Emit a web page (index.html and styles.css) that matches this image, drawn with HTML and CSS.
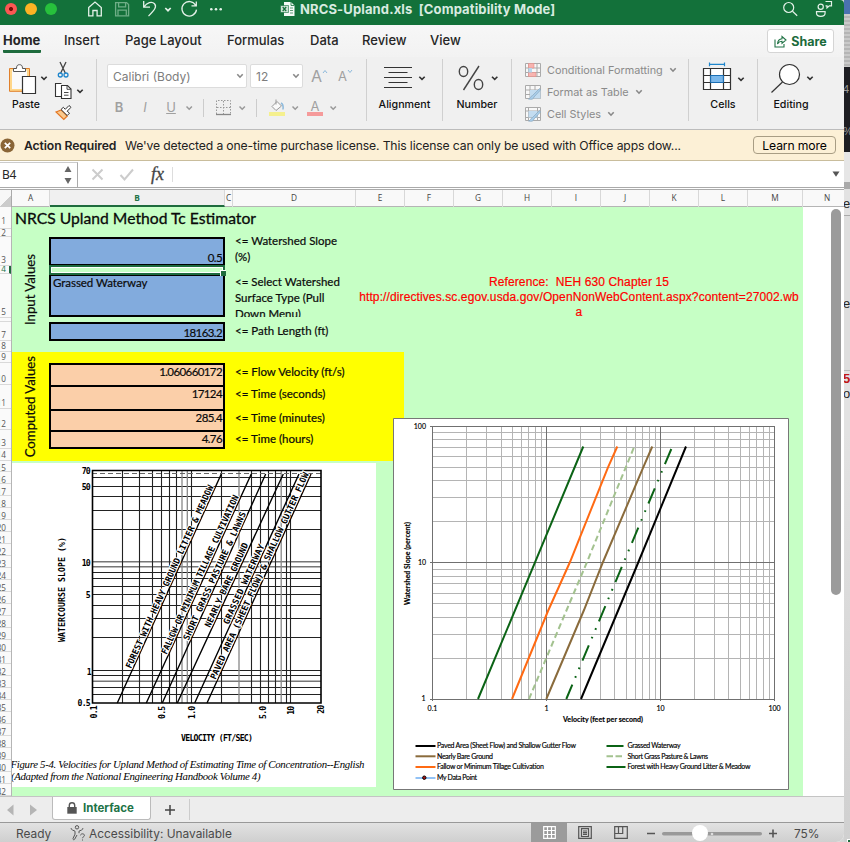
FILE: index.html
```html
<!DOCTYPE html>
<html lang="en">
<head>
<meta charset="utf-8">
<title>NRCS-Upland.xls</title>
<link rel="stylesheet" href="styles.css">
</head>
<body>
<svg class="defs" width="0" height="0">
  <symbol id="chev" viewBox="0 0 8 6"><path d="M1.3 1.3 4 4.2 6.7 1.3" fill="none" stroke="currentColor" stroke-width="1.6"/></symbol>
</svg>
<div class="desktop">
<div class="window">
  <header class="titlebar">
    <span class="light red"></span><span class="light amber"></span><span class="light green"></span>
    <svg class="quick" width="150" height="25" viewBox="80 0 150 25" fill="none" stroke="#e4f1e8" stroke-width="1.3">
      <path d="M88.700 7.500 95 2l6.300 5.500v8.300h-4.200v-5.300h-4.200v5.300h-4.200z"/>
      <g stroke="#6fae87"><path d="M115.600 2.600h11l2 2v11.200h-13z"/><path d="M118.600 2.800v4h7v-4M118 15.600v-5.500h8.300v5.500"/></g>
      <path d="M143.700 1v6.200h6.300M143.900 7c3-4.500 8-6 10.600-3.300 2.500 2.800.5 6-6 12.400"/>
      <path d="m165.300 8 2.700 2.700 2.700-2.700" stroke-width="1.700"/>
      <path d="M195.600 5.200a7.300 7.300 0 1 0 .9 4.500M196.300 1.400v4.500h-4.800"/>
      <g fill="#e4f1e8" stroke="none"><circle cx="211.300" cy="9.300" r="1.300"/><circle cx="216" cy="9.300" r="1.300"/><circle cx="220.700" cy="9.300" r="1.300"/></g>
    </svg>
    <svg class="docicon" width="16" height="16" viewBox="0 0 16 16"><path d="M4 1h7l3.500 3.500V15H4z" fill="#f4faf6"/><path d="M11 1v3.500h3.500" fill="none" stroke="#13713a" stroke-width=".8"/><path d="M10 7h3M10 9.500h3M10 12h3" stroke="#5f9c78"/><path d="M.5 4.500h8v7h-8z" fill="#cfe3d6" stroke="#13713a" stroke-width=".6"/><path d="m2.700 6 3.500 4M6.200 6l-3.500 4" stroke="#13713a" stroke-width="1.200"/></svg>
    <span class="doctitle">NRCS-Upland.xls&nbsp; [Compatibility Mode]</span>
    <svg class="tools" width="54" height="25" viewBox="780 0 54 25" fill="none" stroke="#e4f1e8" stroke-width="1.200"><circle cx="788.700" cy="7.500" r="5"/><path d="m792.500 11.200 4.700 4.500"/><circle cx="820.700" cy="6.700" r="2.600"/><path d="M816.500 11.700h8.600v1.300c0 2-1.700 3.400-4.300 3.400s-4.300-1.400-4.300-3.400zM825.500 1.500h6v4.300h-2.200l-2.300 2.100v-2.100h-1.500"/></svg>
  </header>

  <nav class="tabs">
    <span class="tab active">Home</span><span class="tab">Insert</span><span class="tab">Page Layout</span><span class="tab">Formulas</span><span class="tab">Data</span><span class="tab">Review</span><span class="tab">View</span>
    <button class="share"><svg width="13" height="13" viewBox="0 0 13 13" fill="none" stroke="#217346" stroke-width="1.100"><path d="M1 4.500v7.500h9V9"/><path d="M3.500 9c.3-3.500 2-5 4.500-5.200V1.500L12 5 8 8.400V6.300C6 6.300 4.700 7 3.500 9z"/></svg><span>Share</span></button>
  </nav>

  <section class="ribbon">
    <div class="group clipboard">
      <div class="paste"><svg width="40" height="34" viewBox="8 62 40 34"><path d="M9.500 68.500h20v22.800h-20z" fill="#ffd78a" stroke="#e0802b"/><path d="M12 70.500h15v18.500H12z" fill="#fafafa"/><path d="M13.500 71.500v-3h3c0-2.800 1-3.800 3-3.800s3 1 3 3.800h3v3z" fill="#fff" stroke="#555"/><path d="M22.500 76.500h13v17h-13z" fill="#fff" stroke="#333" stroke-width="1.200"/><path d="m41.300 76.700 2.700 2.700 2.700-2.700" fill="none" stroke="#333" stroke-width="1.600"/></svg><span>Paste</span></div>
      <svg class="clips" width="34" height="64" viewBox="52 60 34 64"><path d="m60 63 5.500 11.500M66 63l-5.500 11.500" stroke="#444" stroke-width="1.300" fill="none"/><circle cx="60.300" cy="76" r="2" fill="none" stroke="#1f86cc" stroke-width="1.300"/><circle cx="66" cy="76" r="2" fill="none" stroke="#1f86cc" stroke-width="1.300"/><path d="M61.500 97.500h-6V84.500h6M61.500 86.500h6l3.500 3.500v9.500h-9.500z" fill="#fff" stroke="#333" stroke-width="1.100"/><path d="M67 86.700v3.600h3.800M64 93.500h4.500M64 96.200h4.500" fill="none" stroke="#333" stroke-width=".9"/><path d="m77.300 90.700 2.700 2.700 2.700-2.700" fill="none" stroke="#333" stroke-width="1.600"/><path d="m56 113 5.300-2 6 6-3.500 3.500z" fill="#f9c98e" stroke="#e57622" stroke-width="1.200"/><path d="m61 110.500 2.300-2.200 2 2 3.700-3.800 2 1.800-3.800 3.900 2.300 2-2.300 2.300z" fill="#fff" stroke="#333"/></svg>
    </div>
    <div class="group font">
      <div class="fontrow">
        <span class="select face">Calibri (Body)<svg class="chev"><use href="#chev"/></svg></span>
        <span class="select size">12<svg class="chev"><use href="#chev"/></svg></span>
        <span class="grow">A<svg width="6" height="5" viewBox="0 0 6 5"><path d="m1 4 2-2.500L5 4" fill="none" stroke="#8cb9dc"/></svg></span>
        <span class="grow small">A<svg width="6" height="5" viewBox="0 0 6 5"><path d="m1 1 2 2.500L5 1" fill="none" stroke="#8cb9dc"/></svg></span>
      </div>
      <div class="fontrow formats">
        <b>B</b><i>I</i><u>U</u>
        <svg width="154" height="20" viewBox="184 97 154 20"><g fill="none" stroke="#999" stroke-width="1.500"><path d="m186.500 106.500 2.700 2.700 2.700-2.700M239.500 106.500l2.700 2.700 2.700-2.700M292.500 106.500l2.700 2.700 2.700-2.700M330.500 106.500l2.700 2.700 2.700-2.700"/></g><path d="M203.500 99v18M256.500 99v18" stroke="#ccc"/><path d="M216.500 114v-13.500h14V114M223.500 101v13M217 107.500h14" fill="none" stroke="#999" stroke-dasharray="1.500 1.500"/><path d="M216 114.500h15" stroke="#888" stroke-width="1.300"/><path d="m272 106.500 5-5 4.500 4.500-5.500 4.500zM276 99.500v5" fill="#fafafa" stroke="#999"/><path d="M281 103c2 1 2.500 3 2 6.500" stroke="#8cb9dc" stroke-width="1.500" fill="none"/><path d="M269 112h16v4h-16z" fill="#f5f08e"/><path d="M307 112h16v4h-16z" fill="#f59a9a"/><text x="315" y="110.500" text-anchor="middle" class="svgui" font-size="13">A</text></svg>
      </div>
    </div>
    <div class="group big"><svg width="50" height="34" viewBox="380 62 50 34" fill="none" stroke="#333"><path d="M384 67.500h28M388.500 72.500h19M384 77.500h28M388.500 82.500h19M384 87.500h28" stroke-width="1.200"/><path d="m419.300 76.700 2.700 2.700 2.700-2.700" stroke-width="1.600"/></svg><span>Alignment</span></div>
    <div class="group big"><svg width="50" height="34" viewBox="452 62 50 34" fill="none" stroke="#444" stroke-width="1.400"><ellipse cx="463.500" cy="71.500" rx="4.200" ry="5"/><ellipse cx="478.500" cy="84.500" rx="4.200" ry="5"/><path d="m479 66-15.500 24"/><path d="m492 76.700 2.700 2.700 2.700-2.700" stroke="#333" stroke-width="1.600"/></svg><span>Number</span></div>
    <div class="group styles">
      <div><svg width="16" height="15" viewBox="0 0 16 15"><path d="M.5.500h15v13H.5zM3.500.500v13M12 .5v13M.5 5h15M.5 9.500h15" fill="#f8f8f8" stroke="#aaa"/><path d="M3.500.500H9V5H3.500zM3.500 9.500H11v4H3.500z" fill="#f8b4b0" stroke="#e58f8a" stroke-width=".6"/><path d="M3.500 5H7v4.500H3.500z" fill="#b9d8ef"/></svg><span>Conditional Formatting</span><svg class="chev"><use href="#chev"/></svg></div>
      <div><svg width="16" height="15" viewBox="0 0 16 15"><path d="M.5.500h15v13H.5zM5 .5v13M10 .5v13M.5 5h15M.5 9.500h15" fill="#f8f8f8" stroke="#aaa"/><path d="M5 5h10.500v8.500H5z" fill="#c3dcf0"/><path d="m14.500 3.500-7 7c-2 .5-1.500 3-4 3.500 3 .8 5 .3 5.500-2l6.500-7z" fill="#a9cdea" stroke="#8aa9c0" stroke-width=".7"/></svg><span>Format as Table</span><svg class="chev"><use href="#chev"/></svg></div>
      <div><svg width="16" height="15" viewBox="0 0 16 15"><path d="M.5.500h15v13H.5zM3.500.500v13M.5 4h15M12.500.500v13M.5 10.500h15" fill="#f8f8f8" stroke="#aaa"/><path d="M3.500 4h9v6.500h-9z" fill="#c3dcf0"/><path d="m14.500 3.500-7 7c-2 .5-1.500 3-4 3.500 3 .8 5 .3 5.500-2l6.500-7z" fill="#a9cdea" stroke="#8aa9c0" stroke-width=".7"/></svg><span>Cell Styles</span><svg class="chev"><use href="#chev"/></svg></div>
    </div>
    <div class="group big"><svg width="50" height="34" viewBox="698 61 50 34" fill="none"><path d="M709.500 63.300h15M709.500 61.500v3.700M724.500 61.500v3.700" stroke="#1f86cc" stroke-width="1.200"/><path d="M703.500 67.500h27v21h-27z" fill="#fff"/><path d="M710.500 74.500h13v7h-13z" fill="#7ab8ec"/><path d="M703.500 67.500h27v21h-27zM703.500 74.500h27M703.500 81.500h27M710.500 67.500v21M723.500 67.500v21" stroke="#333" stroke-width="1.200"/><path d="M710.500 74.500h13v7h-13z" stroke="#1b6fb5"/><path d="m738.300 76.700 2.700 2.700 2.700-2.700" stroke="#333" stroke-width="1.600"/></svg><span>Cells</span></div>
    <div class="group big"><svg width="50" height="34" viewBox="766 62 50 34" fill="none" stroke="#333" stroke-width="1.200"><circle cx="789.500" cy="74.500" r="10" fill="#fff"/><path d="m782.500 82-11 10.500"/><path d="m807.300 76.700 2.700 2.700 2.700-2.700" stroke-width="1.600"/></svg><span>Editing</span></div>
  </section>

  <section class="notice">
    <svg width="15" height="15" viewBox="0 0 15 15"><circle cx="7.500" cy="7.500" r="7" fill="#8a6536"/><path d="m4.800 4.800 5.400 5.400M10.200 4.800l-5.400 5.400" stroke="#fff" stroke-width="1.700"/></svg>
    <strong>Action Required</strong><span class="msg">We've detected a one-time purchase license. This license can only be used with Office apps dow...</span>
    <button>Learn more</button>
  </section>

  <section class="formulabar">
    <div class="namebox"><span>B4</span><svg width="8" height="20" viewBox="0 0 8 20" fill="#666"><path d="M4 1 7.500 7h-7zM4 19l3.500-6h-7z"/></svg></div>
    <svg class="fxbtns" width="50" height="16" viewBox="90 166 50 16" fill="none" stroke="#ccc" stroke-width="2"><path d="m92.500 169.500 10 10M102.500 169.500l-10 10M120.500 175l4 4.500 8.500-10"/></svg>
    <em>fx</em><span class="formula"></span>
    <svg width="8" height="6" viewBox="0 0 8 6"><path d="M.5.500h7L4 5.700z" fill="#555"/></svg>
  </section>

  <div class="colheads"><span class="corner"></span><span>A</span><span class="sel">B</span><span>C</span><span>D</span><span>E</span><span>F</span><span>G</span><span>H</span><span>I</span><span>J</span><span>K</span><span>L</span><span>M</span><span>N</span></div>

  <main class="sheet">
    <div class="rowheads">
      <span>1</span><span>2</span><span>3</span><span class="sel">4</span><span>5</span><span></span><span>7</span><span>8</span><span>9</span><span>10</span><span>11</span><span>12</span><span>13</span><span>14</span><span>15</span><span>16</span><span>17</span><span>18</span><span>19</span><span>20</span><span>21</span><span>22</span><span>23</span><span>24</span><span>25</span><span>26</span><span>27</span><span>28</span><span>29</span><span>30</span><span>31</span><span>32</span><span>33</span><span>34</span><span>35</span><span>36</span><span>37</span><span>38</span><span>39</span><span>40</span><span>41</span><span>42</span>
    </div>
    <div class="cells">
      <div class="yellow"></div>
      <h1>NRCS Upland Method Tc Estimator</h1>
      <div class="side inputs"><span>Input Values</span></div>
      <div class="side computed"><span>Computed Values</span></div>
      <div class="cell blue r3">0.5</div><div class="cell active r4"></div><div class="cell blue r5 text">Grassed Waterway</div><div class="cell blue r7">18163.2</div>
      <div class="cell peach r10">1.060660172</div><div class="cell peach r11">17124</div><div class="cell peach r12">285.4</div><div class="cell peach r13">4.76</div>
      <div class="note n3"><span>&lt;= Watershed Slope<br>(%)</span></div>
      <div class="note n5"><span>&lt;= Select Watershed<br>Surface Type (Pull<br>Down Menu)</span></div>
      <div class="note n7"><span>&lt;= Path Length (ft)</span></div>
      <div class="note n10"><span>&lt;= Flow Velocity (ft/s)</span></div>
      <div class="note n11"><span>&lt;= Time (seconds)</span></div>
      <div class="note n12"><span>&lt;= Time (minutes)</span></div>
      <div class="note n13"><span>&lt;= Time (hours)</span></div>
      <div class="reference">Reference:&nbsp; NEH 630 Chapter 15<br>http://directives.sc.egov.usda.gov/OpenNonWebContent.aspx?content=27002.wb<br>a</div>

      <svg class="figure" width="364" height="324" viewBox="12 463 364 324">
        <path d="M12 463h364v324H12z" fill="#fff"/>
        <g fill="none" stroke="#222" stroke-width="1.100">
          <path d="M92 477.500h229M92 486.500h229M92 496.500h229M92 510.500h229M92 529.500h229M92 572.500h229M92 578.500h229M92 586.500h229M92 594.500h229M92 605.500h229M92 618.500h229M92 637.500h229M92 670.500h229M92 675.500h229M92 687.500h229M92 694.500h229"/>
          <path d="M92 561.700h229M92 566.700h229M92 681.200h229" stroke="#777" stroke-width="1.600"/>
          <path d="M122.500 470v233M139.500 470v233M152.500 470v233M161.500 470v233M169.500 470v233M176.500 470v233M191.500 470v233M221.500 470v233M251.500 470v233M260.500 470v233M268.500 470v233M275.500 470v233M286.500 470v233M290.500 470v233"/>
          <path d="M182 470v233M187.300 470v233M239 470v233M281.200 470v233" stroke="#888" stroke-width="1.300"/>
          <path d="M92 473.500h229" stroke="#666" stroke-dasharray="5 3"/>
          <path d="M92.500 470.500h228.500V703H92.500z" stroke="#000" stroke-width="1.600"/>
        </g>
        <path d="m117.300 703 104-229M146.300 703l105-229M162.300 703l103.400-229M177.300 703l106-229M194.700 703 299 474M207 703l104-229" stroke="#000" stroke-width="1.400" fill="none"/>
        <g class="plot-label">
          <text transform="translate(131 669) rotate(-65.600)" textLength="200">FOREST WITH HEAVY GROUND LITTER &amp; MEADOW</text>
          <text transform="translate(166.500 655) rotate(-65.400)" textLength="174">FALLOW OR MINIMUM TILLAGE CULTIVATION</text>
          <text transform="translate(188.500 641) rotate(-65.700)" textLength="140">SHORT GRASS PASTURE &amp; LAWNS</text>
          <text transform="translate(210 628) rotate(-65.200)" textLength="92">NEARLY BARE GROUND</text>
          <text transform="translate(228.500 625) rotate(-65.500)" textLength="87">GRASSED WATERWAY</text>
          <text transform="translate(215.500 680) rotate(-65.600)" textLength="226">PAVED AREA (SHEET FLOW) &amp; SHALLOW GUTTER FLOW</text>
        </g>
        <g class="axis-label">
          <text transform="translate(65.300 642) rotate(-90)" textLength="105">WATERCOURSE SLOPE (%)</text>
          <text x="181" y="741" textLength="72">VELOCITY (FT/SEC)</text>
          <g class="ticks" text-anchor="end"><text x="90" y="474">70</text><text x="90" y="490">50</text><text x="90" y="566">10</text><text x="90" y="598">5</text><text x="91" y="674.500">1</text><text x="90" y="706">0.5</text>
          <text transform="translate(96.500 706) rotate(-90)">0.1</text><text transform="translate(164.500 706.500) rotate(-90)">0.5</text><text transform="translate(194.500 706.500) rotate(-90)">1.0</text><text transform="translate(265.500 706.500) rotate(-90)">5.0</text><text transform="translate(293.500 706.500) rotate(-90)">10</text><text transform="translate(323.500 705.500) rotate(-90)">20</text></g>
        </g>
        <g class="caption"><text x="10.500" y="767.500" textLength="354">Figure 5-4. Velocities for Upland Method of Estimating Time of Concentration--English</text><text x="11" y="780" textLength="249.500">(Adapted from the National Engineering Handbook Volume 4)</text></g>
      </svg>

      <svg class="chart" width="396" height="372" viewBox="393 418 396 372">
        <path d="M393.500 418.500h395v371h-395z" fill="#fff" stroke="#777"/>
        <g fill="none" stroke="#b4b4b4">
          <path d="M466.500 426v273M486.500 426v273M501.500 426v273M512.500 426v273M521.500 426v273M528.500 426v273M535.500 426v273M541.500 426v273M580.500 426v273M600.500 426v273M614.500 426v273M626.500 426v273M635.500 426v273M642.500 426v273M649.500 426v273M655.500 426v273M694.500 426v273M714.500 426v273M728.500 426v273M740.500 426v273M749.500 426v273M756.500 426v273M763.500 426v273M769.500 426v273"/>
          <path d="M432 658.500h342M432 634.500h342M432 617.500h342M432 603.500h342M432 593.500h342M432 583.500h342M432 576.500h342M432 569.500h342M432 521.500h342M432 497.500h342M432 480.500h342M432 467.500h342M432 456.500h342M432 447.500h342M432 439.500h342M432 432.500h342"/>
          <path d="M432.500 426v275M546.500 426v275M660.500 426v275M774.500 426v275M430 426.500h345M430 562.500h345M430 699.500h345" stroke="#707070"/>
        </g>
        <g fill="none" stroke-width="2">
          <path d="m478 699 57-136.700L583.300 446.500" stroke="#0b6315"/>
          <path d="m512 699 36-88 11.700-26L570 562l38-94.700 9.300-20.800" stroke="#ff6a13"/>
          <path d="m529 699 38.500-91L587 562l47.300-115.500" stroke="#a3c28f" stroke-dasharray="6 3.500"/>
          <path d="m546.300 699 37.700-89 19-48 39.700-93.300 9.600-22.200" stroke="#8a6b3c"/>
          <path d="M671.300 449 566.300 699" stroke="#0b6315" stroke-dasharray="16.500 7.500 1.700 7.700 1.700 7.500"/>
          <path d="m581 699 56-133.500 49-119" stroke="#000"/>
        </g>
        <g class="charttext">
          <g text-anchor="end"><text x="426" y="428.500">100</text><text x="426" y="565">10</text><text x="425.500" y="701">1</text></g>
          <g text-anchor="middle"><text x="432.500" y="711">0.1</text><text x="546.500" y="711">1</text><text x="660.500" y="711">10</text><text x="774.500" y="711">100</text></g>
          <text class="strong" x="563" y="721.500" textLength="80">Velocity (feet per second)</text>
          <text class="strong" transform="translate(410 605) rotate(-90)" textLength="83">Watershed Slope (percent)</text>
          <text x="437" y="748" textLength="139">Paved Area (Sheet Flow) and Shallow Gutter Flow</text>
          <text x="437" y="759" textLength="56">Nearly Bare Ground</text>
          <text x="437" y="769" textLength="107">Fallow or Minimum Tillage Cultivation</text>
          <text x="437" y="780" textLength="40">My Data Point</text>
          <text x="627.500" y="748" textLength="53">Grassed Waterway</text>
          <text x="627.500" y="759" textLength="80.500">Short Grass Pasture &amp; Lawns</text>
          <text x="627.500" y="769" textLength="123">Forest with Heavy Ground Litter &amp; Meadow</text>
        </g>
        <g fill="none" stroke-width="2"><path d="M415.500 746h20" stroke="#000"/><path d="M415.500 756.300h20" stroke="#8a6b3c"/><path d="M415.500 767h20" stroke="#ff6a13"/><path d="M415.500 778h20" stroke="#92c2f5"/><path d="M606.500 746h17M606.500 767h19" stroke="#0b6315"/><path d="M606.500 756.300h17" stroke="#a3c28f" stroke-dasharray="6.500 2.500"/></g>
        <circle cx="424.300" cy="777.700" r="1.700" fill="#b01515" stroke="#000"/>
      </svg>
    </div>
    <div class="gutter"><span class="thumb"></span></div>
  </main>

  <footer class="sheettabs">
    <svg width="42" height="14" viewBox="0 0 42 14" fill="#b5b5b5"><path d="M13.500 1.500v11L7 7zM30 1.500v11L37 7z"/></svg>
    <div class="sheettab"><svg width="10" height="12" viewBox="0 0 10 12"><path d="M.3 5h9.400v6.700H.3z" fill="#555"/><path d="M2.300 5V3.500C2.300 1.800 3.300.8 5 .8s2.700 1 2.700 2.700V5" fill="none" stroke="#555" stroke-width="1.400"/></svg><span>Interface</span></div>
    <div class="add"><svg width="10" height="10" viewBox="0 0 10 10"><path d="M5 0v10M0 5h10" stroke="#444" stroke-width="1.500"/></svg></div>
  </footer>
  <footer class="status">
    <span class="ready">Ready</span>
    <svg width="16" height="16" viewBox="0 0 16 16" fill="none" stroke="#555"><circle cx="7" cy="2.300" r="1.700"/><path d="M1.500 3c-.8 1 0 1.500 1 2L5 6.200v3l-2 4.300c-.3 1.200 1 1.700 1.700.7L7 10M12.500 3c.8 1 0 1.500-1 2L9 6.200v2M10.500 10.300c.2-2 4-2 3.900.2 0 1.300-1.900 1.300-1.900 2.700M12.500 14.500v1"/></svg>
    <span class="acc">Accessibility: Unavailable</span>
    <span class="views">
      <span class="view on"><svg width="13" height="13" viewBox="0 0 13 13"><path d="M.7.700h11.600v11.600H.7zM4.500.500v12M8.500.500v12M.5 4.500h12M.5 8.500h12" fill="none" stroke="#fff" stroke-width="1.200"/></svg></span>
      <span class="view"><svg width="14" height="13" viewBox="0 0 14 13" fill="none" stroke="#555" stroke-width="1.200"><path d="M.7.700h12.600v11.600H.7zM3.500 2.700h7v7.800h-7zM5 5h4M5 6.700h4M5 8.400h4"/></svg></span>
      <span class="view"><svg width="14" height="13" viewBox="0 0 14 13" fill="none" stroke="#555" stroke-width="1.200"><path d="M.7.700h12.600v11.600H.7zM.7 7.500h8V.7M4.500.700v6.800"/></svg></span>
    </span>
    <svg class="slider" width="132" height="20" viewBox="645 823 132 20"><path d="M647 833.500h8M769 833.500h8M773 829.500v8" stroke="#555" stroke-width="1.600"/><rect x="662" y="832" width="100" height="3.600" rx="1.800" fill="#999"/><circle cx="712" cy="834" r="1.300" fill="#ddd"/><circle cx="700" cy="833" r="8" fill="#fff"/></svg>
    <span class="pct">75%</span>
  </footer>
</div>
<aside class="behind"><i class="b1"></i><i class="b2"></i><i class="b3"><span>4</span><span>%</span></i><i class="b4"><span>e</span></i><i class="b5"><span>e</span></i><i class="b6"><span class="redtext">5</span><span>o</span></i></aside>
</div>
</body>
</html>
```
FILE: styles.css
```css
* { box-sizing: border-box; }
body { margin: 0; width: 850px; height: 842px; overflow: hidden; font-family: Inter, "Liberation Sans", sans-serif; color: #262626; }
svg { display: block; flex: none; }
button { font: inherit; padding: 0; }
.defs { position: absolute; }
.desktop { display: flex; width: 850px; height: 842px; background: #d6d6d6; }
.window { width: 844px; height: 842px; display: flex; flex-direction: column; background: #fff; border-radius: 0 4px 8px 0; overflow: hidden; flex: none; }
.window > * { flex: none; }

.titlebar { height: 25px; background: #13713a; display: flex; align-items: flex-start; }
.light { width: 12px; height: 12px; border-radius: 50%; margin: 3px 4px 0; }
.light.red { margin-left: 5px; background: radial-gradient(circle, #7a0d08 0 1.6px, #fc5753 2.400px); }
.light.amber { background: #fdb324; }
.light.green { background: #27c13c; }
.quick { margin-left: 19px; }
.docicon { margin: 1px 0 0 50px; }
.doctitle { margin-left: 4px; line-height: 19px; font-size: 13px; font-weight: 700; letter-spacing: .13px; color: #d9ebe0; white-space: pre; width: 260px; }
.tools { margin-left: auto; margin-right: 10px; }

.tabs { height: 32px; background: linear-gradient(#f7f7f7, #f2f2f2); display: grid; grid-template-columns: 61px 61px 102px 83px 52px 68px 1fr auto; padding: 0 10px 0 3px; align-items: start; font-size: 13px; font-weight: 500; }
.tab { line-height: 30px; white-space: nowrap; }
.tab.active { font-weight: 700; width: 38px; height: 28px; border-bottom: 3px solid #1e6b3d; border-radius: 1px; }
.share { width: 67px; height: 24px; margin-top: 4px; border: 1px solid #d5d5d5; border-radius: 3px; background: #fff; color: #1b6b3b; font-weight: 700; font-size: 12.500px; display: flex; align-items: center; justify-content: center; gap: 4px; }

.ribbon { height: 73px; background: #f0f0f0; border-bottom: 1px solid #bcbcbc; display: grid; grid-template-columns: 97px 270px 76px 69px 177px 69px 1fr; align-items: start; font-size: 11px; }
.group { height: 62px; margin-top: 2px; border-right: 1px solid #d0d0d0; }
.group:last-child { border: 0; padding-right: 20px; }
.clipboard { display: flex; }
.paste { width: 52px; padding: 3px 0 0 8px; }
.paste span { display: block; margin-left: 4px; line-height: 14px; margin-top: 2px; color: #111; font-weight: 500; font-size: 10.500px; }
.big { display: flex; flex-direction: column; align-items: center; padding-top: 3px; }
.big span { line-height: 14px; margin-top: 2px; color: #111; font-weight: 500; font-size: 10.700px; }
.font { padding: 5px 0 0 10px; color: #a0a0a0; }
.fontrow { display: flex; height: 24px; align-items: center; }
.select { height: 24px; border: 1px solid #dcdcdc; border-radius: 2px; background: #fff; display: flex; align-items: center; justify-content: space-between; padding: 0 2px 0 5px; color: #7d7d7d; font-size: 12px; margin-right: 3px; }
.face { width: 140px; } .size { width: 53px; }
.chev { width: 8px; height: 6px; color: #888; }
.grow { display: flex; width: 27px; font-size: 16px; padding-left: 5px; line-height: 20px; }
.grow svg { margin-top: 3px; } .grow.small { font-size: 13px; }
.formats { margin-top: 7px; font-size: 13px; }
.formats b, .formats i, .formats u { width: 26px; text-align: center; }
.formats b { margin-left: -1px; font-weight: 600; }
.svgui { fill: #a0a0a0; font-family: Inter, sans-serif; }
.styles { display: grid; grid-template-rows: repeat(3, 22px); padding-left: 13px; color: #8a8a8a; }
.styles div { display: flex; align-items: center; gap: 6px; white-space: nowrap; font-size: 10.850px; }

.notice { height: 31px; background: #fcf0d6; border-bottom: 1px solid #c9bd9c; display: flex; align-items: center; font-size: 12.200px; color: #222; }
.notice strong { font-weight: 600; margin-left: 9px; width: 101px; white-space: nowrap; letter-spacing: -.1px; }
.msg { white-space: nowrap; letter-spacing: -.14px; }
.notice button { margin-left: auto; margin-right: 8px; width: 83px; height: 18px; border: 1px solid #a89d84; border-radius: 4px; background: transparent; white-space: nowrap; letter-spacing: -.15px; }

.formulabar { height: 29px; display: flex; align-items: center; border-bottom: 3px double #aaa; padding-right: 4px; }
.namebox { height: 25px; width: 78px; border-right: 1px solid #aaa; border-top: 1px solid #ccc; display: flex; align-items: center; justify-content: space-between; padding: 0 5px 0 2px; font: 12px "Noto Sans", sans-serif; letter-spacing: -.4px; }
.fxbtns { margin-left: 12px; }
.formulabar em { font: italic 18px "Liberation Serif", serif; margin-left: 11px; width: 21px; color: #444; -webkit-text-stroke: .3px; }
.formula { flex: 1; height: 15px; border-left: 1px solid #ddd; }

.colheads { height: 17px; display: grid; grid-template-columns: 12px 38px 175px 8px 123px repeat(8, 49px) 55px 49px; background: #f9f9f9; border-bottom: 1px solid #b5b5b5; font: 8.300px/15px "Open Sans", sans-serif; color: #444; text-align: center; }
.colheads span { border-right: 1px solid #d8d8d8; }
.colheads .corner { background: linear-gradient(135deg, #f7f7f7 58%, #ccc 58%); border-color: #aaa; }
.colheads .sel { background: #f0f0f0; color: #217346; border-bottom: 2px solid #1e6b3d; font-weight: 700; }

.sheet { height: 589px; display: grid; grid-template-columns: 12px 791px 1fr; overflow: hidden; }
.rowheads { display: grid; grid-template-rows: 22px 8px 29px 8px 44px 4px 19px 11px 11px 22px 24px 21px 19px 12px 10.500px repeat(26, 12px) 12.500px; background: #fafafa; border-right: 1px solid #b5b5b5; overflow: hidden; font: 8.200px/9px "Open Sans", sans-serif; color: #555; }
.rowheads span { border-bottom: 1px solid #d9d9d9; display: flex; justify-content: flex-end; align-items: flex-end; padding: 0 5px 1px 0; overflow: hidden; }
.rowheads span:first-child { padding-bottom: 3px; }
.rowheads span:nth-child(2) { padding-bottom: 0; line-height: 7px; }
.rowheads span:nth-child(n+15) { padding-bottom: 0; line-height: 6px; }
.rowheads .sel { border-right: 2px solid #1e6b3d; color: #217346; padding: 0 3px 0 0; }
.cells { position: relative; background: #c6ffc5; display: grid; grid-template-columns: 37px 176px 9px 124px 46px 399px; grid-template-rows: 22px 8px 29px 8px 43px 5px 19px 11px 11px 22px 24px 21px 19px 12px 1fr; color: #0a0a0a; font: 11.500px/16px Lato, sans-serif; -webkit-text-stroke: .2px; }
.cells svg { -webkit-text-stroke: 0; }
.yellow { grid-area: 9 / 1 / 15 / 6; background: #ff0; }
.cells h1 { grid-area: 1 / 1 / 2 / 6; margin: 0 0 0 3px; font: 15.700px/23px Lato, sans-serif; white-space: nowrap; -webkit-text-stroke: .3px; }
.side { display: flex; align-items: center; justify-content: center; font-size: 13.200px; padding-right: 2px; }
.side span { writing-mode: vertical-rl; transform: rotate(180deg); white-space: nowrap; line-height: 16px; }
.inputs { grid-area: 3 / 1 / 8 / 2; } .computed { grid-area: 9 / 1 / 15 / 2; }
.cell { grid-column: 2; border: 2px solid #000; display: flex; align-items: flex-end; justify-content: flex-end; padding-right: 1px; line-height: 13px; letter-spacing: -.6px; }
.blue { background: #82abdd; } .peach { background: #fbcfa9; align-items: flex-start; margin-bottom: -2px; line-height: 13px; }
.r3 { grid-row: 3; } .r4 { grid-row: 4; } .r5 { grid-row: 5; } .r7 { grid-row: 7; line-height: 12px; }
.r10 { grid-row: 10; } .r11 { grid-row: 11; } .r12 { grid-row: 12; } .r13 { grid-row: 13; margin-bottom: 0; }
.cell.active { border-color: #1e6b3d; box-shadow: inset 0 0 0 1px #fff; margin: -1px 0 -1px; z-index: 1; position: relative; }
.active::after { content: ""; position: absolute; right: -3px; bottom: -3px; width: 5px; height: 5px; background: #1e6b3d; border: solid #fff; border-width: 1px 0 0 1px; box-sizing: content-box; }
.text { align-items: flex-start; justify-content: flex-start; padding-left: 2px; letter-spacing: -.05px; }
.note { grid-column: 4; overflow: hidden; display: flex; align-items: flex-end; white-space: nowrap; padding-left: 1px; }
.n3 { grid-row: 3; padding-bottom: 1px; } .n5 { grid-row: 5; align-items: flex-start; } .n7 { grid-row: 7; padding-bottom: 2px; }
.n10 { grid-row: 10; align-items: flex-start; padding-top: 1px; } .n11 { grid-row: 11; align-items: flex-start; padding-top: 1px; } .n12 { grid-row: 12; align-items: flex-start; padding-top: 1px; } .n13 { grid-row: 13; align-items: flex-start; padding-top: 1px; }
.reference { grid-area: 5 / 6 / 8 / 7; margin-left: -48px; margin-top: 1px; width: 446px; text-align: center; color: #f00; font: 12px/15px "Liberation Sans", sans-serif; letter-spacing: .11px; white-space: nowrap; }
.figure { position: absolute; left: 0; top: 256px; }
.chart { position: absolute; left: 381px; top: 211px; }
.plot-label, .axis-label { font: bold 8.800px "DejaVu Sans Mono", monospace; fill: #000; }
.plot-label { stroke: #fff; stroke-width: 2px; paint-order: stroke; }
.axis-label { font-size: 8.200px; }
.ticks { letter-spacing: -.8px; }
.caption { font: italic 10.800px "Liberation Serif", serif; fill: #000; }
.charttext { font: 7px Lato, sans-serif; fill: #000; stroke: #000; stroke-width: .15px; }
.strong { font-weight: 700; }
.gutter { display: flex; justify-content: flex-end; padding: 2px 3px; }
.thumb { width: 10px; height: 386px; border-radius: 5px; background: #9b9b9b; }

.sheettabs { height: 26px; background: #ededed; border-top: 1px solid #c4c4c4; display: flex; align-items: center; }
.sheettab { width: 99px; height: 23px; margin-left: 10px; align-self: flex-start; background: #fff; border: 1px solid #bbb; border-top: 0; border-radius: 0 0 3px 3px; display: flex; align-items: center; gap: 6px; padding-left: 14px; color: #217346; font: 700 11.500px Inter, sans-serif; }
.add { width: 39px; height: 21px; display: flex; align-items: center; justify-content: center; border-right: 1px solid #ccc; }
.status { height: 20px; background: linear-gradient(#e2e2e2, #cfcfcf); border-top: 1px solid #999; display: flex; align-items: center; font-size: 11.900px; color: #4a4a4a; white-space: nowrap; }
.ready, .acc, .pct { padding-top: 2px; }
.ready { margin-left: 16px; width: 54px; }
.acc { margin-left: 3px; }
.views { display: flex; margin-left: auto; }
.view { width: 36px; height: 20px; display: flex; align-items: center; justify-content: center; }
.on { background: #9b9b9b; }
.slider { margin-left: 6px; }
.pct { width: 50px; margin-left: 17px; }

.behind { width: 6px; overflow: hidden; display: flex; flex-direction: column; font: 13px "Liberation Sans", sans-serif; }
.behind i { display: block; font-style: normal; } .behind span { display: block; margin-left: -1px; }
.b1 { height: 14px; background: #4a72b0; }
.b2 { height: 53px; background: repeating-linear-gradient(#c9c9c9 0 2px, #b5b5b5 2px 4px); }
.behind .b3 { height: 85px; background: #1d1d22; color: #999; font-size: 11px; padding-top: 16px; }
.b3 span { height: 42px; }
.b4 { height: 64px; padding-top: 44px; background: linear-gradient(#e6e6e6 30px, #aaa 30px 37px, #e2e2e2 37px); border-bottom: 1px solid #aaa; }
.b5 { height: 155px; padding-top: 80px; background: #dedede; border-bottom: 1px solid #bbb; }
.b6 { flex: 1; background: linear-gradient(#e2e2e2 60px, #d0d0d0); }
.redtext { color: #c01818; font-weight: 700; }
```
